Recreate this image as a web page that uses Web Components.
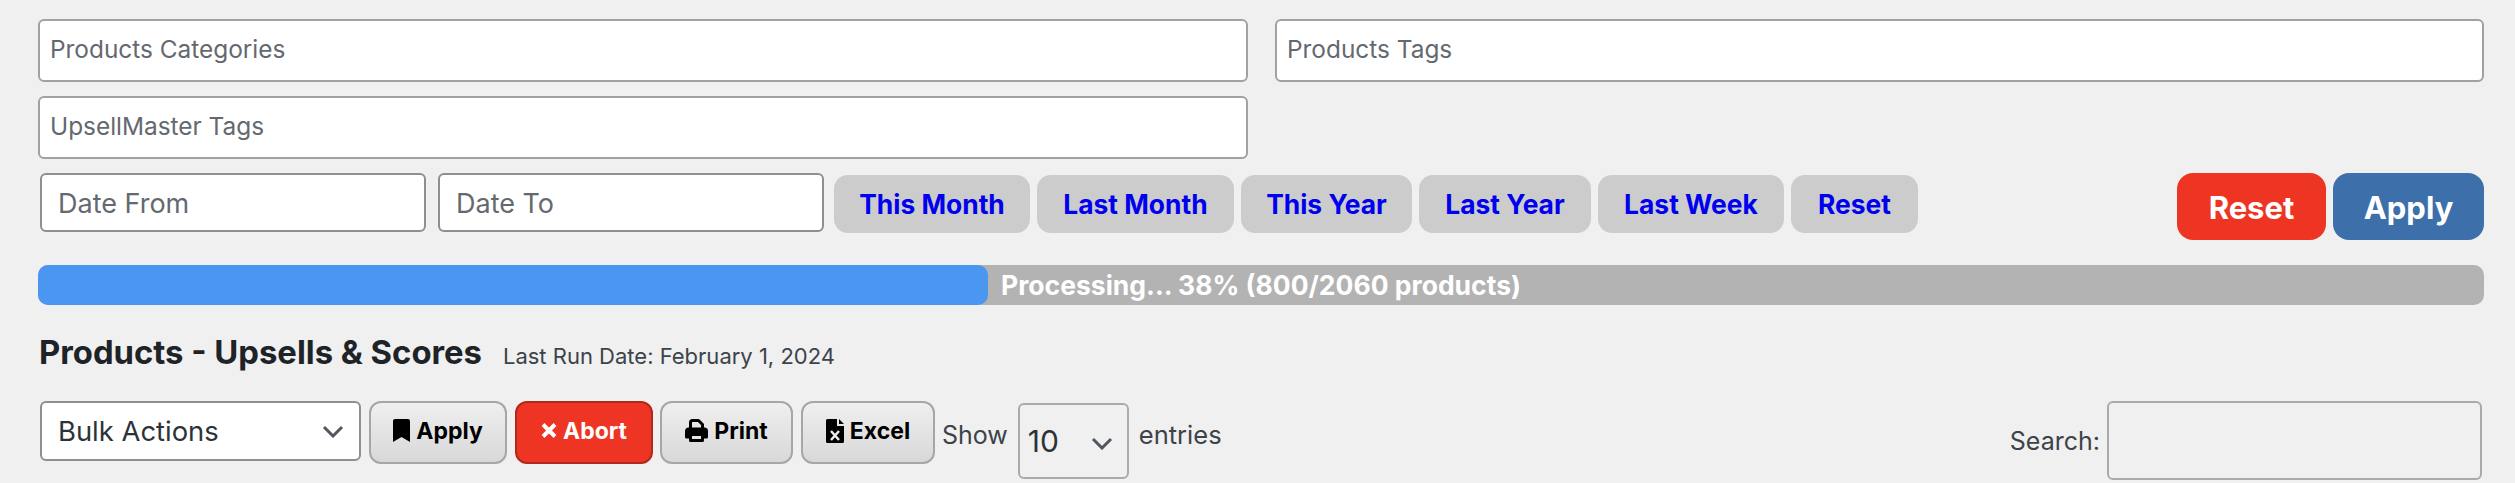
<!DOCTYPE html>
<html>
<head>
<meta charset="utf-8">
<title>Products - Upsells & Scores</title>
<style>
    html, body { margin: 0; background: #f0f0f0; overflow: hidden; }
    body { font-family: Inter, "Liberation Sans", sans-serif; }
</style>
</head>
<body>
<report-page></report-page>

<script>
// tag box, the empty multi select above the date row
class TagBox extends HTMLElement {
    constructor() {
        super();
        this.attachShadow({ mode: "open" });
        this.shadowRoot.innerHTML = `
            <style>
                :host {
                    display: block;
                    box-sizing: border-box;
                    height: 63px;
                    padding: 12px 10px;
                    background: #fff;
                    border: 2px solid #a0a1a4;
                    border-radius: 6px;
                    font-size: 24.4px;
                    line-height: 32px;
                    color: #646970;
                }
            </style>
            <slot></slot>
        `;
    }
}
customElements.define("tag-box", TagBox);

// date field, only shows its placeholder
class DateField extends HTMLElement {
    constructor() {
        super();
        this.attachShadow({ mode: "open" });
        this.shadowRoot.innerHTML = `
            <style>
                :host {
                    display: block;
                    box-sizing: border-box;
                    height: 59px;
                    padding: 0 16px;
                    background: #fff;
                    border: 2px solid #8c8f94;
                    border-radius: 6px;
                    font-size: 27px;
                    line-height: 57px;
                    color: #646970;
                }
            </style>
            <slot></slot>
        `;
    }
}
customElements.define("date-field", DateField);

// grey range shortcut, width comes from --w
class RangeButton extends HTMLElement {
    constructor() {
        super();
        this.attachShadow({ mode: "open" });
        this.shadowRoot.innerHTML = `
            <style>
                :host {
                    display: block;
                    width: var(--w);
                    height: 58px;
                    background: #ccc;
                    border-radius: 14px;
                    font-size: 26.4px;
                    font-weight: 700;
                    line-height: 58px;
                    text-align: center;
                    color: #0000ee;
                    white-space: nowrap;
                }
            </style>
            <slot></slot>
        `;
    }
}
customElements.define("range-button", RangeButton);

// big solid button on the right of the date row
class SolidButton extends HTMLElement {
    constructor() {
        super();
        this.attachShadow({ mode: "open" });
        this.shadowRoot.innerHTML = `
            <style>
                :host {
                    display: block;
                    width: var(--w);
                    height: 67px;
                    background: var(--solid-colour, #ee3524);
                    border-radius: 16px;
                    font-size: 31px;
                    font-weight: 700;
                    line-height: 69px;
                    text-align: center;
                    color: #fff;
                }
            </style>
            <slot></slot>
        `;
    }
}
customElements.define("solid-button", SolidButton);

class ProgressBar extends HTMLElement {
    constructor() {
        super();
        this.attachShadow({ mode: "open" });
        this.shadowRoot.innerHTML = `
            <style>
                :host {
                    display: flex;
                    height: 40px;
                    background: #b3b3b3;
                    border-radius: 10px;
                    overflow: hidden;
                    font-size: 26.5px;
                    font-weight: 700;
                    line-height: 40px;
                    color: #fff;
                }
                .fill {
                    width: 950px;
                    background: #4a96f0;
                    border-radius: 0 10px 10px 0;
                }
                .label { margin-left: 13px; white-space: nowrap; }
            </style>
            <div class="fill"></div>
            <div class="label"><slot></slot></div>
        `;
    }
}
customElements.define("progress-bar", ProgressBar);

// toolbar button with gradient and an icon in the icon slot
class ToolButton extends HTMLElement {
    constructor() {
        super();
        this.attachShadow({ mode: "open" });
        this.shadowRoot.innerHTML = `
            <style>
                :host {
                    display: flex;
                    align-items: center;
                    justify-content: center;
                    gap: 6px;
                    box-sizing: border-box;
                    width: var(--w);
                    height: 63px;
                    padding-bottom: 4px;
                    background: linear-gradient(#efefef, #d8d8d8);
                    border: 2px solid #a6a6a6;
                    border-radius: 12px;
                    font-size: 23px;
                    font-weight: 700;
                    color: #000;
                }
                :host([danger]) {
                    background: #ee3524;
                    border-color: #b1281c;
                    color: #fff;
                }
            </style>
            <slot name="icon"></slot>
            <slot></slot>
        `;
    }
}
customElements.define("tool-button", ToolButton);

// select look alike with a chevron
class DropDown extends HTMLElement {
    constructor() {
        super();
        this.attachShadow({ mode: "open" });
        this.shadowRoot.innerHTML = `
            <style>
                :host {
                    display: flex;
                    align-items: center;
                    justify-content: space-between;
                    box-sizing: border-box;
                    height: 60px;
                    width: 321px;
                    padding: 0 15px 0 16px;
                    background: #fff;
                    border: 2px solid #8c8f94;
                    border-radius: 6px;
                    font-size: 27.4px;
                    color: #2c3338;
                }
                :host([plain]) {
                    width: 111px;
                    height: 76px;
                    padding: 0 14px 0 8px;
                    background: transparent;
                    border-color: #aaa;
                    font-size: 30px;
                }
                :host([plain]) svg { margin-top: 4px; }
                svg { display: block; }
            </style>
            <slot></slot>
            <svg width="22" height="13" viewBox="0 0 22 13" fill="none" stroke="#50575e" stroke-width="3"><path d="M2 2 11 11 20 2"/></svg>
        `;
    }
}
customElements.define("drop-down", DropDown);

class ReportPage extends HTMLElement {
    constructor() {
        super();
        this.attachShadow({ mode: "open" });
        this.shadowRoot.innerHTML = `
            <style>
                :host {
                    display: block;
                    box-sizing: border-box;
                    width: 2515px;
                    height: 483px;
                    padding: 19px 31px 0 38px;
                    color: #3c434a;
                }
                .tags {
                    display: grid;
                    grid-template-columns: 1210px 1fr;
                    gap: 14px 27px;
                }
                .dates {
                    display: flex;
                    align-items: flex-start;
                    margin-top: 14px;
                    padding-left: 2px;
                }
                .dates date-field:nth-child(1) { width: 386px; margin-right: 12px; }
                .dates date-field:nth-child(2) { width: 386px; margin-right: 10px; }
                .dates range-button { margin: 2px 7px 0 0; }
                .dates .right { display: flex; gap: 7px; margin-left: auto; }
                progress-bar { margin-top: 25px; }
                .title {
                    display: flex;
                    align-items: baseline;
                    height: 96px;
                }
                h2 {
                    margin: 0 0 0 1px;
                    font-size: 32.8px;
                    font-weight: 700;
                    line-height: 94px;
                    color: #1d2327;
                }
                .title span { margin-left: 21px; font-size: 22px; color: #3c434a; }
                .toolbar { display: flex; align-items: flex-start; padding-left: 2px; }
                .toolbar tool-button { margin-left: 8px; }
                .toolbar tool-button + tool-button + tool-button { margin-left: 7px; }
                .toolbar tool-button:last-of-type { margin-left: 8px; }
                .show { margin: 0 10px 0 7px; font-size: 25px; line-height: 68px; }
                .entries { margin-left: 10px; font-size: 25.5px; line-height: 68px; }
                .search { display: flex; margin-left: auto; margin-right: 2px; }
                .search label { font-size: 25px; line-height: 80px; margin-right: 7px; }
                .search div {
                    box-sizing: border-box;
                    width: 375px;
                    height: 79px;
                    border: 2px solid #aaa;
                    border-radius: 6px;
                }
                .plain-wrap { margin-top: 2px; }
            </style>
            <div class="tags">
                <tag-box>Products Categories</tag-box>
                <tag-box>Products Tags</tag-box>
                <tag-box>UpsellMaster Tags</tag-box>
            </div>
            <div class="dates">
                <date-field>Date From</date-field>
                <date-field>Date To</date-field>
                <range-button style="--w: 196px">This Month</range-button>
                <range-button style="--w: 197px">Last Month</range-button>
                <range-button style="--w: 171px">This Year</range-button>
                <range-button style="--w: 172px">Last Year</range-button>
                <range-button style="--w: 186px">Last Week</range-button>
                <range-button style="--w: 127px">Reset</range-button>
                <div class="right">
                    <solid-button style="--w: 149px">Reset</solid-button>
                    <solid-button style="--w: 151px; --solid-colour: #3d6fab">Apply</solid-button>
                </div>
            </div>
            <progress-bar>Processing... 38% (800/2060 products)</progress-bar>
            <div class="title">
                <h2>Products - Upsells &amp; Scores</h2>
                <span>Last Run Date: February 1, 2024</span>
            </div>
            <div class="toolbar">
                <drop-down>Bulk Actions</drop-down>
                <tool-button style="--w: 138px">
                    <svg slot="icon" width="17" height="23" viewBox="0 0 17 23"><path d="M0 2a2 2 0 0 1 2-2h13a2 2 0 0 1 2 2v21l-8.500-5-8.500 5z"/></svg>
                    Apply
                </tool-button>
                <tool-button danger style="--w: 138px">
                    <svg slot="icon" width="16" height="15" viewBox="0 0 16 15" stroke="#fff" stroke-width="4"><path d="M2 1.500l12 12M14 1.500l-12 12"/></svg>
                    Abort
                </tool-button>
                <tool-button style="--w: 133px">
                    <svg slot="icon" width="23" height="23" viewBox="0 0 23 23" fill="none" stroke="#000" stroke-width="3" stroke-linejoin="round"><path d="M5.500 10V3.500a2 2 0 0 1 2-2h6l4 4V10"/><path fill="#000" d="M1.500 18v-6a2 2 0 0 1 2-2h16a2 2 0 0 1 2 2v6z"/><path fill="#e4e4e4" d="M5.500 15.500h12v6h-12z"/></svg>
                    Print
                </tool-button>
                <tool-button style="--w: 134px">
                    <svg slot="icon" width="18" height="24" viewBox="0 0 18 24"><path d="M1.500 0H11v7h7v15.500a1.500 1.500 0 0 1-1.500 1.500h-15A1.500 1.500 0 0 1 0 22.500v-21A1.500 1.500 0 0 1 1.500 0zM13 0l5 5h-5z"/><path fill="none" stroke="#eee" stroke-width="2.500" d="M5 12l8 9M13 12l-8 9"/></svg>
                    Excel
                </tool-button>
                <div class="show">Show</div>
                <div class="plain-wrap"><drop-down plain>10</drop-down></div>
                <div class="entries">entries</div>
                <div class="search"><label>Search:</label><div></div></div>
            </div>
        `;
    }
}
customElements.define("report-page", ReportPage);
</script>
</body>
</html>
